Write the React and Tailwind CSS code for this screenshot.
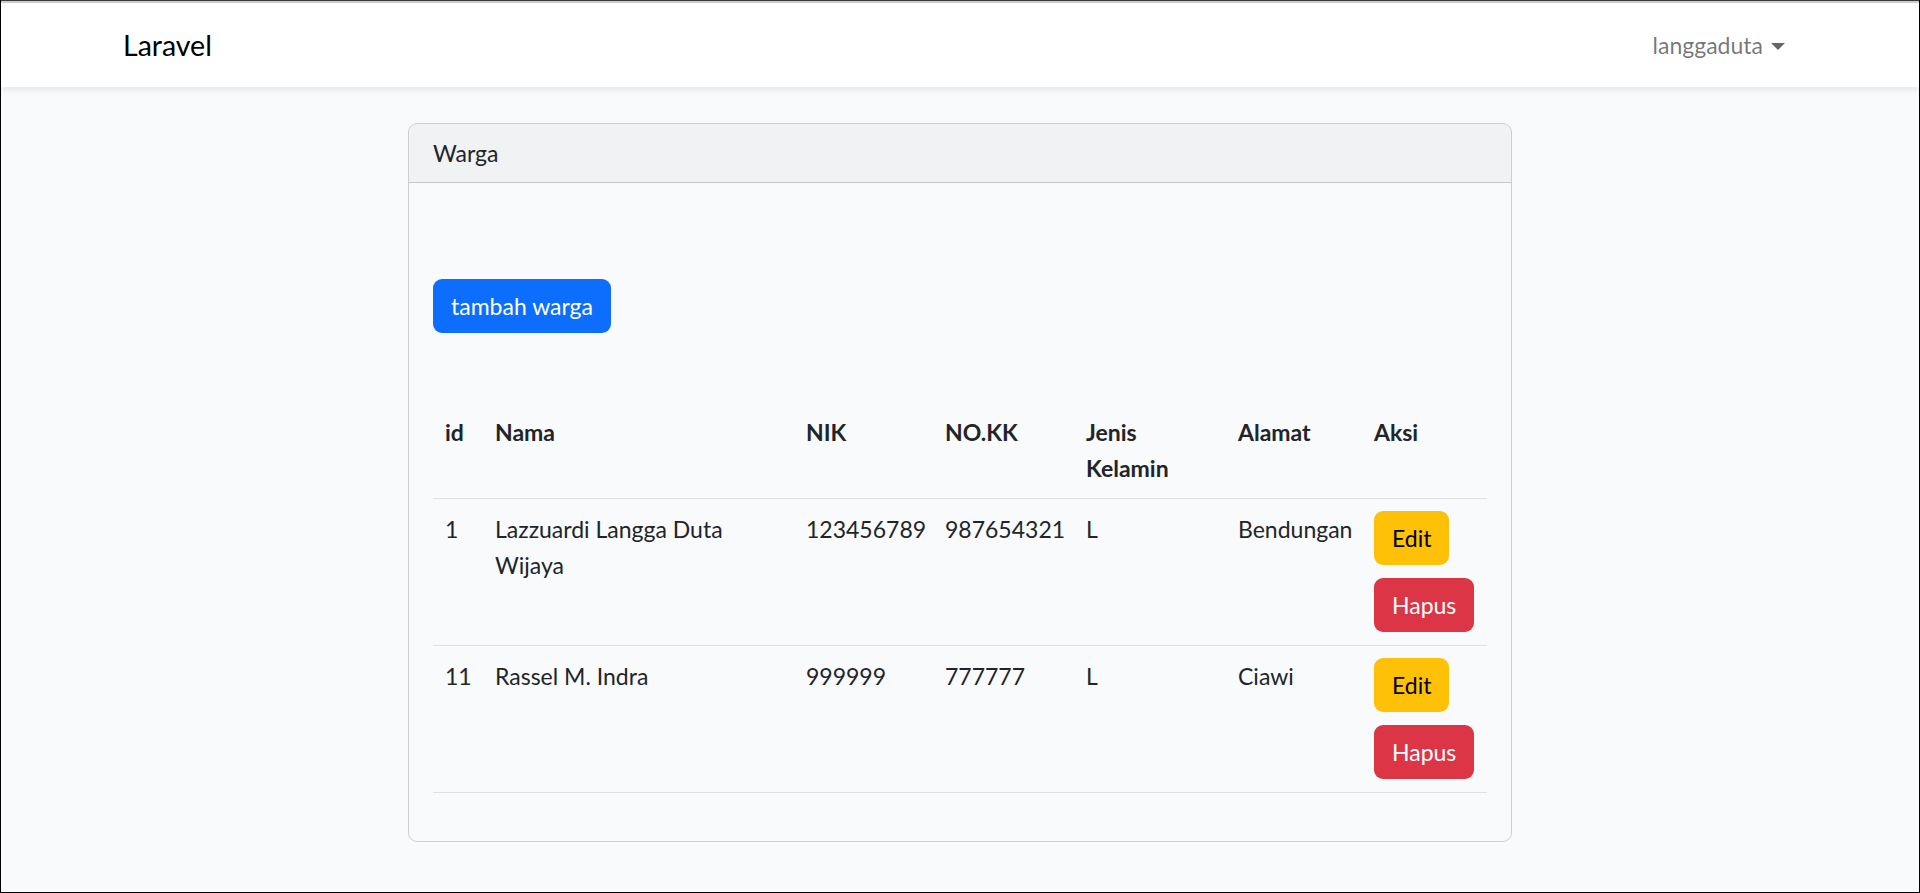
import React from 'react';

const rows = [
  { id: 1, nama: 'Lazzuardi Langga Duta Wijaya', nik: '123456789', kk: '987654321', jk: 'L', alamat: 'Bendungan' },
  { id: 11, nama: 'Rassel M. Indra', nik: '999999', kk: '777777', jk: 'L', alamat: 'Ciawi' },
];

const App = () => {
  return (
    <div className="h-[893px] overflow-hidden bg-[#f8fafc] border-x border-b border-black text-[#212529] font-['Lato',sans-serif] text-[23px] leading-[36px]">
      <div className="h-[3px] border-t border-[#3a3a3a] bg-[#cdcdcd]" />

      <nav className="bg-white shadow-[0_3px_6px_rgba(0,0,0,0.075)] py-[12px]">
        <div className="w-[1710px] mx-auto px-[18px] flex items-center justify-between">
          <a className="text-[28.5px] leading-[45px] py-[7.5px] text-black">Laravel</a>
          <a className="px-[12px] py-[12px] flex items-center text-[rgba(0,0,0,0.55)]">
            langgaduta
            <span className="ml-[8px] mt-[2px] inline-block w-0 h-0 border-t-[7px] border-t-[rgba(0,0,0,0.6)] border-x-[7px] border-x-transparent" />
          </a>
        </div>
      </nav>

      <main className="py-[36px]">
        <div className="w-[1710px] mx-auto">
          <div className="w-[1104px] mx-auto border border-[rgba(0,0,0,0.175)] rounded-[9px]">
            <div className="px-[24px] py-[11px] bg-[rgba(0,0,0,0.03)] border-b border-[rgba(0,0,0,0.175)] rounded-t-[9px]">
              Warga
            </div>
            <div className="p-[24px]">
              <div className="h-[72px]" />
              <button className="bg-[#0d6efd] text-white px-[18px] py-[9px] rounded-[9px]">
                tambah warga
              </button>
              <div className="h-[69px]" />

              <table className="w-full table-fixed border-collapse mb-[24px]">
                <colgroup>
                  <col className="w-[50px]" />
                  <col className="w-[311px]" />
                  <col className="w-[139px]" />
                  <col className="w-[141px]" />
                  <col className="w-[152px]" />
                  <col className="w-[136px]" />
                  <col />
                </colgroup>
                <thead>
                  <tr className="border-b border-[#dee2e6]">
                    {['id', 'Nama', 'NIK', 'NO.KK', 'Jenis Kelamin', 'Alamat', 'Aksi'].map((h) => (
                      <th key={h} className="p-[12px] text-left align-top font-bold">{h}</th>
                    ))}
                  </tr>
                </thead>
                <tbody>
                  {rows.map((r) => (
                    <tr key={r.id} className="border-b border-[#dee2e6]">
                      <td className="p-[12px] align-top">{r.id}</td>
                      <td className="p-[12px] align-top">{r.nama}</td>
                      <td className="p-[12px] align-top">{r.nik}</td>
                      <td className="p-[12px] align-top">{r.kk}</td>
                      <td className="p-[12px] align-top">{r.jk}</td>
                      <td className="p-[12px] align-top">{r.alamat}</td>
                      <td className="p-[12px] pb-[13px] align-top">
                        <div className="flex flex-col items-start gap-[13px]">
                          <a className="bg-[#ffc107] text-black px-[18px] py-[9px] rounded-[9px]">Edit</a>
                          <button className="bg-[#dc3545] text-white px-[18px] py-[9px] rounded-[9px]">Hapus</button>
                        </div>
                      </td>
                    </tr>
                  ))}
                </tbody>
              </table>
            </div>
          </div>
        </div>
      </main>
    </div>
  );
};

export default App;
